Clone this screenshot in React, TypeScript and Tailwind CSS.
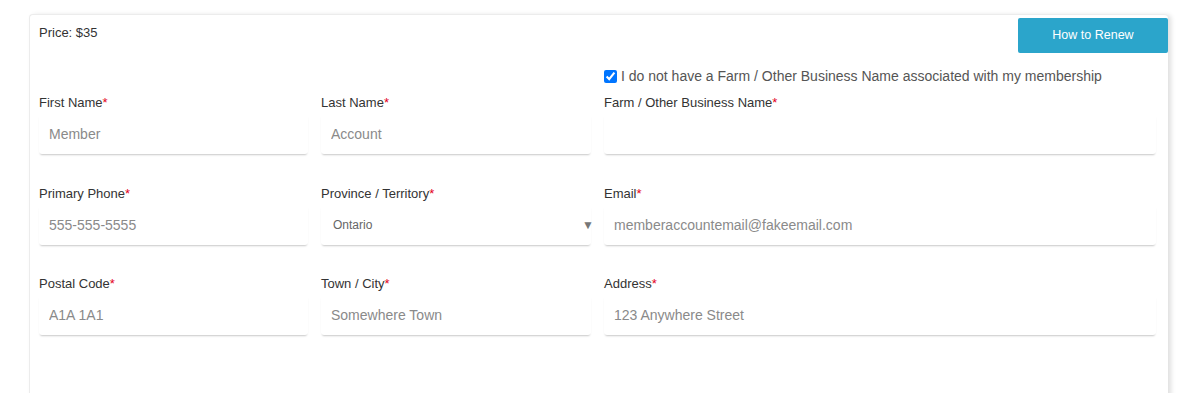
import { ChangeEvent, useState } from 'react'

type Field = {
  label: string
  placeholder?: string
  select?: string
}

const rows: Field[][] = [
  [
    { label: 'First Name', placeholder: 'Member' },
    { label: 'Last Name', placeholder: 'Account' },
    { label: 'Farm / Other Business Name', placeholder: '' },
  ],
  [
    { label: 'Primary Phone', placeholder: '555-555-5555' },
    { label: 'Province / Territory', select: 'Ontario' },
    { label: 'Email', placeholder: 'memberaccountemail@fakeemail.com' },
  ],
  [
    { label: 'Postal Code', placeholder: 'A1A 1A1' },
    { label: 'Town / City', placeholder: 'Somewhere Town' },
    { label: 'Address', placeholder: '123 Anywhere Street' },
  ],
]

function FormField({ field }: { field: Field }) {
  return (
    <div>
      <label className="block h-[16px] text-[13px] leading-[16px] text-[#333]">
        {field.label}
        <span className="text-[#e3001b]">*</span>
      </label>
      <div className="mt-[3px] h-[40px] rounded-[3px] bg-white shadow-[0_2px_2px_-1px_rgba(0,0,0,0.22)]">
        {field.select ? (
          <div className="flex h-full items-center justify-between pl-[12px] text-[12px] text-[#666]">
            <span>{field.select}</span>
            <span className="-mr-[3px] text-[12px] text-[#777]">▼</span>
          </div>
        ) : (
          <input
            className="h-full w-full bg-transparent px-[10px] text-[14px] text-[#333] outline-none placeholder:text-[#8a8a8a]"
            placeholder={field.placeholder}
          />
        )}
      </div>
    </div>
  )
}

export default function App() {
  const [noFarm, setNoFarm] = useState(true)

  return (
    <div className="h-[393px] overflow-hidden bg-white pl-[29px] pt-[14px] font-['Liberation_Sans',Arial,sans-serif]">
      <div className="h-[400px] w-[1139px] rounded-t-[4px] border-l border-t border-[#ececec] bg-white pl-[9px] pr-[12px] shadow-[3px_1px_5px_rgba(0,0,0,0.13)]">
        <div className="flex items-start justify-between">
          <p className="pt-[10px] text-[13px] leading-[16px] text-[#333]">Price: $35</p>
          <button className="-mr-[12px] mt-[3px] h-[35px] w-[150px] rounded-[2px] bg-[#2ba5cb] text-[12.5px] text-white">
            How to Renew
          </button>
        </div>

        <div className="mt-[13px] grid grid-cols-[269px_270px_1fr] gap-x-[13px]">
          <label className="col-start-3 flex h-[20px] items-center text-[14px] text-[#555]">
            <input
              type="checkbox"
              checked={noFarm}
              onChange={(e: ChangeEvent<HTMLInputElement>) => setNoFarm(e.target.checked)}
              className="m-0 mr-[4px] h-[13px] w-[13px]"
            />
            I do not have a Farm / Other Business Name associated with my membership
          </label>
        </div>

        <div className="mt-[9px] grid grid-cols-[269px_270px_1fr] gap-x-[13px] gap-y-[31.5px]">
          {rows.map((row) => row.map((f) => <FormField key={f.label} field={f} />))}
        </div>
      </div>
    </div>
  )
}
